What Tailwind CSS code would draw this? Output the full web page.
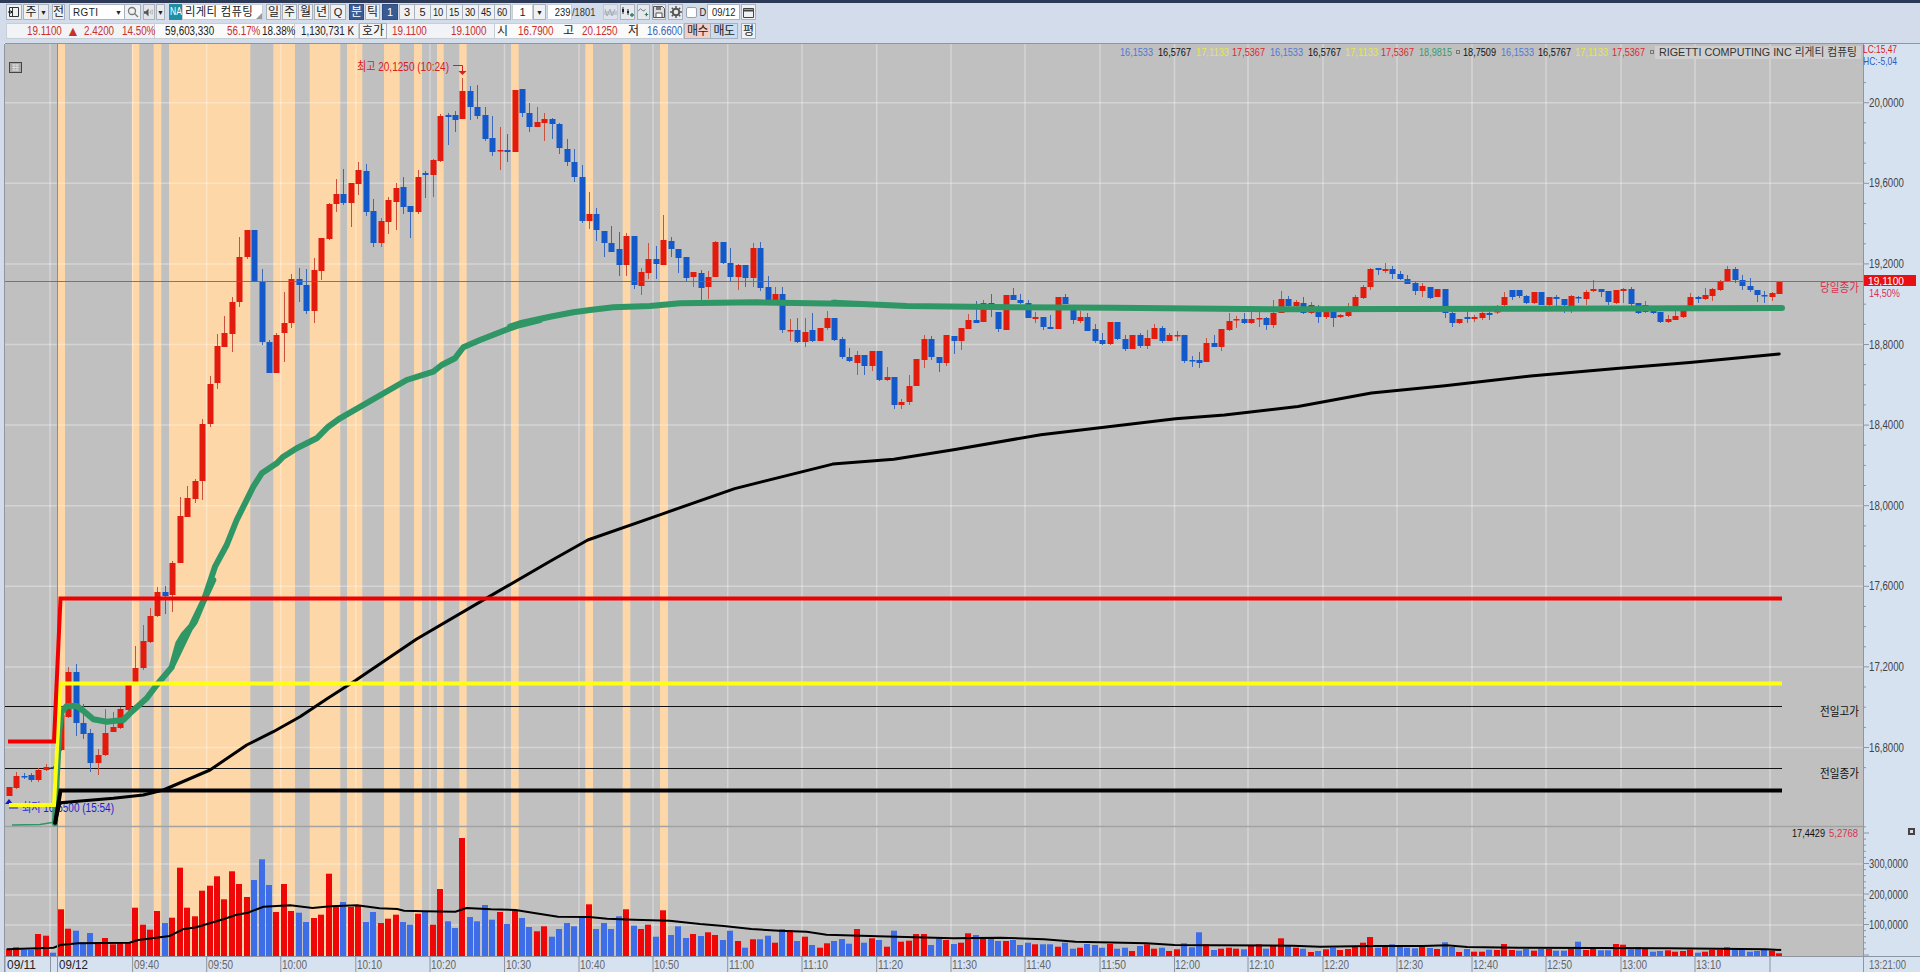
<!DOCTYPE html>
<html lang="ko">
<head>
<meta charset="utf-8">
<title>RGTI chart</title>
<script src="https://cdn.jsdelivr.net/npm/@tailwindcss/browser@4"></script>
</head>
<body class="m-0 w-[1920px] h-[972px] overflow-hidden bg-[#d3dcea] flex flex-col font-['Liberation_Sans','Noto_Sans_CJK_KR',sans-serif] text-[#222]">
<div class="h-[3px] bg-[#2c3a58] shrink-0"></div>

<!-- toolbar row 1 -->
<div class="mt-[1px] h-4 pl-[6px] flex items-stretch text-[12px] leading-none shrink-0">
  <div class="w-4 flex items-center justify-center border border-[#a9b1bd] bg-[#f0f1f3]"><svg width="12" height="12" viewBox="0 0 12 12" fill="none" stroke="#333"><path d="M1.5 1.5h9v9h-9zM4.5 1.5v9"/><path d="M0 6h4M2.5 4.5 4 6 2.5 7.500" stroke="#111"/></svg></div>
  <div class="ml-[1px] w-4 flex items-center justify-center border border-[#a9b1bd] bg-[#f0f1f3]">주</div>
  <div class="w-[10px] flex items-center justify-center border border-l-0 border-[#a9b1bd] bg-[#e8eaee] text-[7px]">▼</div>
  <div class="ml-[3px] w-[13px] flex items-center justify-center border border-[#a9b1bd] bg-[#f0f1f3]">전</div>
  <div class="ml-1 w-[44px] flex items-center pl-[3px] bg-white border border-[#a9b1bd] border-r-0 text-[11px] whitespace-nowrap"><span class="scale-x-[0.9] origin-left tracking-[0.5px]">RGTI</span></div>
  <div class="w-3 flex items-center justify-center bg-white border border-l-0 border-[#a9b1bd] text-[7px]">▼</div>
  <div class="w-4 flex items-center justify-center border border-l-0 border-[#a9b1bd] bg-[#f0f1f3]"><svg width="12" height="12" viewBox="0 0 12 12" fill="none" stroke="#777" stroke-width="1.300"><circle cx="5" cy="5" r="3.500"/><path d="m7.500 7.500 3.500 3.500"/></svg></div>
  <div class="ml-[2px] w-3 flex items-center justify-center border border-[#a9b1bd] bg-[#e4e6ea]"><svg width="11" height="11" viewBox="0 0 11 11"><path d="M0 4h2l3-3v9L2 7H0z" fill="#555"/><path d="M7 3.500v4M9 2.500v6" stroke="#777" stroke-dasharray="1 1"/></svg></div>
  <div class="ml-[1px] w-[9px] flex items-center justify-center border border-[#a9b1bd] bg-[#e8eaee] text-[7px]">▼</div>
  <div class="ml-1 w-[13px] flex items-center justify-center bg-[#1f8fa3] text-white text-[10px]"><span class="scale-x-[0.85]">NA</span></div>
  <div class="w-[81px] flex items-center pl-[2px] bg-white border border-[#c8ced6] whitespace-nowrap relative"><span class="scale-x-[0.95] origin-left tracking-[0.3px]">리게티 컴퓨팅</span><span class="absolute right-0 bottom-0 w-0 h-0 border-l-[6px] border-b-[6px] border-l-transparent border-b-[#999]"></span></div>
  <div class="ml-[3px] w-[15px] flex items-center justify-center border border-[#a9b1bd] bg-[#f0f1f3]">일</div>
  <div class="ml-[1px] w-[15px] flex items-center justify-center border border-[#a9b1bd] bg-[#f0f1f3]">주</div>
  <div class="ml-[1px] w-[15px] flex items-center justify-center border border-[#a9b1bd] bg-[#f0f1f3]">월</div>
  <div class="ml-[1px] w-[15px] flex items-center justify-center border border-[#a9b1bd] bg-[#f0f1f3]">년</div>
  <div class="ml-[1px] w-4 flex items-center justify-center border border-[#a9b1bd] bg-[#f0f1f3] text-[11px]">Q</div>
  <div class="ml-[3px] w-[15px] flex items-center justify-center border border-[#2f4d80] bg-[#3a5a92] text-white">분</div>
  <div class="ml-[1px] w-[15px] flex items-center justify-center border border-[#a9b1bd] bg-[#f0f1f3]">틱</div>
  <div class="ml-[2px] w-4 flex items-center justify-center border border-[#2f4d80] bg-[#3a5a92] text-white text-[11px]">1</div>
  <div class="ml-[1px] w-4 flex items-center justify-center border border-[#a9b1bd] bg-[#f0f1f3] text-[11px]">3</div>
  <div class="w-4 flex items-center justify-center border border-l-0 border-[#a9b1bd] bg-[#f0f1f3] text-[11px]">5</div>
  <div class="w-4 flex items-center justify-center border border-l-0 border-[#a9b1bd] bg-[#f0f1f3] text-[11px]"><span class="scale-x-[0.85]">10</span></div>
  <div class="w-4 flex items-center justify-center border border-l-0 border-[#a9b1bd] bg-[#f0f1f3] text-[11px]"><span class="scale-x-[0.85]">15</span></div>
  <div class="w-4 flex items-center justify-center border border-l-0 border-[#a9b1bd] bg-[#f0f1f3] text-[11px]"><span class="scale-x-[0.85]">30</span></div>
  <div class="w-4 flex items-center justify-center border border-l-0 border-[#a9b1bd] bg-[#f0f1f3] text-[11px]"><span class="scale-x-[0.85]">45</span></div>
  <div class="w-4 flex items-center justify-center border border-l-0 border-[#a9b1bd] bg-[#f0f1f3] text-[11px]"><span class="scale-x-[0.85]">60</span></div>
  <div class="ml-[1px] w-[21px] flex items-center justify-center bg-white border border-[#c8ced6] text-[11px]">1</div>
  <div class="w-[13px] flex items-center justify-center border border-[#a9b1bd] bg-[#f0f1f3] text-[7px]">▼</div>
  <div class="ml-[1px] w-[25px] flex items-center justify-end pr-[1px] bg-white border border-[#c8ced6] text-[11px]"><span class="scale-x-[0.85] origin-right">239</span></div>
  <div class="w-[28px] flex items-center text-[11px] text-[#333] whitespace-nowrap"><span class="scale-x-[0.85] origin-left">/1801</span></div>
  <div class="ml-[3px] w-[15px] flex items-center justify-center border border-[#c2c8d2] bg-[#dfe4ec]"><svg width="13" height="11" viewBox="0 0 13 11" fill="none" stroke="#a8aeb8"><path d="M1 2l2 7 3-7 2 7 3-7M0 5h13M0 7h13"/></svg></div>
  <div class="ml-[2px] w-[15px] flex items-center justify-center border border-[#a9b1bd] bg-[#e6e9ee]"><svg width="13" height="12" viewBox="0 0 13 12"><path d="M2 1v7M7 3v6" stroke="#333"/><path d="M1 3h2v3H1zM6 5h2v2H6z" fill="#222"/><path d="M11 7v4M9 9h4" stroke="#2a7d5a" stroke-width="1.300"/></svg></div>
  <div class="ml-[2px] w-[13px] flex items-center justify-center border border-[#a9b1bd] bg-[#e6e9ee]"><svg width="13" height="12" viewBox="0 0 13 12" fill="none"><path d="M0 5l3-3 3 3 3-2" stroke="#666"/><path d="M10 7v4M8 9h4" stroke="#2a7d5a" stroke-width="1.300"/></svg></div>
  <div class="ml-[2px] w-[14px] flex items-center justify-center border border-[#a9b1bd] bg-[#e6e9ee]"><svg width="12" height="12" viewBox="0 0 12 12"><path d="M.5.5h9l2 2v9H.5z" fill="#ddd" stroke="#555"/><path d="M3 1h5v3H3z" fill="#777"/><path d="M3 7h6v4.500H3z" fill="#fff" stroke="#555"/></svg></div>
  <div class="ml-[2px] w-[15px] flex items-center justify-center border border-[#a9b1bd] bg-[#e6e9ee]"><svg width="12" height="12" viewBox="0 0 12 12"><circle cx="6" cy="6" r="3.300" fill="none" stroke="#555" stroke-width="2"/><path d="M6 0v2M6 10v2M0 6h2M10 6h2M1.800 1.800l1.400 1.400M8.800 8.800l1.400 1.400M1.800 10.200l1.400-1.400M8.800 3.200l1.400-1.400" stroke="#555" stroke-width="1.500"/></svg></div>
  <div class="ml-[3px] w-[11px] h-[11px] self-center rounded-[2px] bg-white border border-[#9aa2ae]"></div>
  <div class="ml-[2px] w-2 flex items-center text-[11px]"><span class="scale-x-[0.85]">D</span></div>
  <div class="w-[33px] flex items-center justify-center bg-white border border-[#a9b1bd] text-[11px] whitespace-nowrap"><span class="scale-x-[0.85]">09/12</span></div>
  <div class="ml-[1px] w-[15px] flex items-center justify-center border border-[#a9b1bd] bg-[#f0f1f3]"><svg width="11" height="11" viewBox="0 0 11 11" fill="none" stroke="#444"><path d="M.5 1.500h10v9H.5z"/><path d="M.5 3.500h10" stroke-width="2"/></svg></div>
</div>

<!-- toolbar row 2 -->
<div class="mt-[3px] h-4 ml-[6px] flex items-center text-[12px] leading-none whitespace-nowrap shrink-0">
  <div class="w-[149px] h-full flex items-center bg-[#f1f3f6] border border-[#c8ced6] text-[#c9302c]">
    <span class="ml-5 w-[39px] scale-x-[0.82] origin-left">19.1100</span><span class="w-[18px] text-[14px]">▲</span><span class="w-[39px] scale-x-[0.82] origin-left">2.4200</span><span class="w-[32px] scale-x-[0.82] origin-left">14.50%</span>
  </div>
  <div class="w-[139px] h-full flex items-center bg-[#fafafa] border-y border-[#c8ced6]">
    <span class="ml-[10px] w-[62px] scale-x-[0.82] origin-left">59,603,330</span><span class="w-[35px] scale-x-[0.82] origin-left text-[#c9302c]">56.17%</span><span class="w-[32px] scale-x-[0.82] origin-left">18.38%</span>
  </div>
  <div class="w-[65px] h-full flex items-center bg-[#f1f3f6] border border-[#c8ced6]">
    <span class="ml-[6px] scale-x-[0.82] origin-left">1,130,731 K</span>
  </div>
  <div class="w-[28px] h-full flex items-center justify-center bg-[#f5f5f5] border border-[#a9b1bd]">호가</div>
  <div class="w-[107px] h-full flex items-center bg-[#f1f3f6] border-y border-[#c8ced6] text-[#c9302c]">
    <span class="ml-[5px] w-[59px] scale-x-[0.82] origin-left">19.1100</span><span class="w-[40px] scale-x-[0.82] origin-left">19.1000</span>
  </div>
  <div class="w-[190px] h-full flex items-center bg-[#fafafa] border border-[#c8ced6]">
    <span class="ml-[2px] w-[21px]">시</span><span class="w-[45px] scale-x-[0.82] origin-left text-[#c9302c]">16.7900</span><span class="w-[19px]">고</span><span class="w-[46px] scale-x-[0.82] origin-left text-[#c9302c]">20.1250</span><span class="w-[19px]">저</span><span class="w-[36px] scale-x-[0.82] origin-left text-[#3a66b8]">16.6600</span>
  </div>
  <div class="w-[27px] h-full flex items-center justify-center bg-[#f3cfc7] border border-[#a9b1bd] tracking-[-0.5px]">매수</div>
  <div class="w-[27px] h-full flex items-center justify-center bg-[#c9def2] border border-l-0 border-[#a9b1bd] tracking-[-0.5px]">매도</div>
  <div class="ml-[3px] w-[15px] h-full flex items-center justify-center bg-[#f1f2f4] border border-[#a9b1bd]">평</div>
</div>

<!-- chart -->
<svg id="chart" class="mt-[3px] block shrink-0" width="1920" height="930" viewBox="0 42 1920 930" font-size="12">
  <rect x="0" y="42" width="1920" height="930" fill="#d3dcea"/>
  <rect x="4" y="43" width="1916" height="929" fill="#f4f6fa"/>
  <rect x="5" y="44" width="1858" height="912" fill="#c0c0c0"/>
  <rect x="1864" y="44" width="56" height="928" fill="#d7e2f1"/>
  <rect x="5" y="957" width="1858" height="15" fill="#d7e2f1"/>
  <g id="bands" fill="#fdd7a8"></g>
  <g id="grid" stroke="#ffffff" stroke-opacity="0.32" stroke-width="1.500"></g>
  <path d="M5 826.500H1863" stroke="#a2a2a2" stroke-width="1.500"/>
  <path d="M5 956.500H1920M1863.500 44V972M5 43.500H1920M4.500 44V972" stroke="#8e96a2"/>
  <g id="vol"></g>
  <polyline id="vma" fill="none" stroke="#000" stroke-width="2"/>
  <path d="M57.500 44V956" stroke="#e06a6a"/>
  <path d="M5 706.500H1782M5 768.500H1782" stroke="#111"/>
  <g id="candles"></g>
  <path d="M5 281.500H1863" stroke="#d8334f" stroke-opacity="0.85"/>
  <text x="22" y="812" fill="#1f1fd0" textLength="92" lengthAdjust="spacingAndGlyphs">최저 16,6500 (15:54)</text>
  <path d="M9 808h9" stroke="#1f1fd0"/>
  <path d="M5 804l4-5 4 5z" fill="#1414c8"/>
  <polyline points="12,825 40,824.500 55,822" fill="none" stroke="#2f9665" stroke-width="1.500"/>
  <polyline id="green" fill="none" stroke="#2f9665" stroke-width="6" stroke-linejoin="round" stroke-linecap="round"/>
  <polyline id="ma" fill="none" stroke="#000" stroke-width="3" stroke-linejoin="round" stroke-linecap="round"/>
  <polyline points="9,805 54,805 60.500,683.500 1782,683.500" fill="none" stroke="#ffff14" stroke-width="4"/>
  <polyline points="8,741.500 54,741.500 60.500,598.500 1782,598.500" fill="none" stroke="#f00000" stroke-width="4"/>
  <polyline points="55,824 60.500,790.500 1782,790.500" fill="none" stroke="#000" stroke-width="4"/>

  <!-- annotation -->
  <text x="357" y="71" fill="#d42020" textLength="92" lengthAdjust="spacingAndGlyphs">최고 20,1250 (10:24)</text>
  <path d="M453 65.500h9.500V71" fill="none" stroke="#d42020"/>
  <path d="M458.500 71h8l-4 4z" fill="#d42020"/>

  <!-- grid icon -->
  <rect x="9.500" y="62.500" width="12" height="10" fill="#a8a8a8" stroke="#444"/>
  <path d="M12 65h7M12 67.500h7M12 70h7M14 64v7M17 64v7" stroke="#dcdcdc"/>

  <!-- legend -->
  <rect x="1655" y="46" width="206" height="13" fill="#cfcfcf"/>
  <g font-size="11">
    <text x="1120" y="56" fill="#4f78d8" textLength="33" lengthAdjust="spacingAndGlyphs">16,1533</text>
    <text x="1158" y="56" fill="#111" textLength="33" lengthAdjust="spacingAndGlyphs">16,5767</text>
    <text x="1196" y="56" fill="#e6e64a" textLength="33" lengthAdjust="spacingAndGlyphs">17,1133</text>
    <text x="1232" y="56" fill="#dc2830" textLength="33" lengthAdjust="spacingAndGlyphs">17,5367</text>
    <text x="1270" y="56" fill="#4f78d8" textLength="33" lengthAdjust="spacingAndGlyphs">16,1533</text>
    <text x="1308" y="56" fill="#111" textLength="33" lengthAdjust="spacingAndGlyphs">16,5767</text>
    <text x="1345" y="56" fill="#e6e64a" textLength="33" lengthAdjust="spacingAndGlyphs">17,1133</text>
    <text x="1381" y="56" fill="#dc2830" textLength="33" lengthAdjust="spacingAndGlyphs">17,5367</text>
    <text x="1419" y="56" fill="#3a9a68" textLength="33" lengthAdjust="spacingAndGlyphs">18,9815</text>
    <rect x="1456.500" y="50.500" width="3" height="3" fill="none" stroke="#777"/>
    <text x="1463" y="56" fill="#111" textLength="33" lengthAdjust="spacingAndGlyphs">18,7509</text>
    <text x="1501" y="56" fill="#4f78d8" textLength="33" lengthAdjust="spacingAndGlyphs">16,1533</text>
    <text x="1538" y="56" fill="#111" textLength="33" lengthAdjust="spacingAndGlyphs">16,5767</text>
    <text x="1575" y="56" fill="#e6e64a" textLength="33" lengthAdjust="spacingAndGlyphs">17,1133</text>
    <text x="1612" y="56" fill="#dc2830" textLength="33" lengthAdjust="spacingAndGlyphs">17,5367</text>
    <rect x="1650.500" y="50.500" width="3" height="3" fill="none" stroke="#777"/>
    <text x="1659" y="56" fill="#333" textLength="198" lengthAdjust="spacingAndGlyphs">RIGETTI COMPUTING INC  리게티 컴퓨팅</text>
  </g>
  <g font-size="11">
    <text x="1863" y="53" fill="#d42020" textLength="34" lengthAdjust="spacingAndGlyphs">LC:15,47</text>
    <text x="1863" y="65" fill="#2a5fc0" textLength="34" lengthAdjust="spacingAndGlyphs">HC:-5,04</text>
  </g>

  <!-- price axis -->
  <g id="ticks" stroke="#8a94a2"></g>
  <g fill="#444" font-size="12.500">
    <text x="1869" y="107" textLength="35" lengthAdjust="spacingAndGlyphs">20,0000</text>
    <text x="1869" y="187" textLength="35" lengthAdjust="spacingAndGlyphs">19,6000</text>
    <text x="1869" y="268" textLength="35" lengthAdjust="spacingAndGlyphs">19,2000</text>
    <text x="1869" y="349" textLength="35" lengthAdjust="spacingAndGlyphs">18,8000</text>
    <text x="1869" y="429" textLength="35" lengthAdjust="spacingAndGlyphs">18,4000</text>
    <text x="1869" y="510" textLength="35" lengthAdjust="spacingAndGlyphs">18,0000</text>
    <text x="1869" y="590" textLength="35" lengthAdjust="spacingAndGlyphs">17,6000</text>
    <text x="1869" y="671" textLength="35" lengthAdjust="spacingAndGlyphs">17,2000</text>
    <text x="1869" y="752" textLength="35" lengthAdjust="spacingAndGlyphs">16,8000</text>
    <text x="1869" y="868" textLength="39" lengthAdjust="spacingAndGlyphs">300,0000</text>
    <text x="1869" y="899" textLength="39" lengthAdjust="spacingAndGlyphs">200,0000</text>
    <text x="1869" y="929" textLength="39" lengthAdjust="spacingAndGlyphs">100,0000</text>
  </g>
  <rect x="1864" y="275" width="52" height="11" fill="#e81010"/>
  <text x="1868" y="285" fill="#fff" font-size="11" textLength="36" lengthAdjust="spacingAndGlyphs">19,1100</text>
  <text x="1869" y="297" fill="#d8334f" font-size="11" textLength="31" lengthAdjust="spacingAndGlyphs">14,50%</text>
  <text x="1820" y="292" fill="#d8334f" textLength="39" lengthAdjust="spacingAndGlyphs">당일종가</text>
  <text x="1820" y="716" fill="#111" textLength="39" lengthAdjust="spacingAndGlyphs">전일고가</text>
  <text x="1820" y="778" fill="#111" textLength="39" lengthAdjust="spacingAndGlyphs">전일종가</text>

  <!-- volume labels -->
  <g font-size="11">
    <text x="1792" y="837" fill="#111" textLength="33" lengthAdjust="spacingAndGlyphs">17,4429</text>
    <text x="1829" y="837" fill="#d8334f" textLength="29" lengthAdjust="spacingAndGlyphs">5,2768</text>
  </g>
  <rect x="1908" y="828" width="7" height="7" fill="#444"/>
  <rect x="1910" y="830" width="3" height="3" fill="#ddd"/>

  <!-- time axis -->
  <path id="tticks" stroke="#8a94a2"/>
  <g fill="#222" font-size="12.500">
    <text x="7" y="969" textLength="29" lengthAdjust="spacingAndGlyphs">09/11</text>
    <text x="59" y="969" textLength="29" lengthAdjust="spacingAndGlyphs">09/12</text>
  </g>
  <g fill="#666" font-size="12.500">
    <text x="134" y="969" textLength="25" lengthAdjust="spacingAndGlyphs">09:40</text>
    <text x="208" y="969" textLength="25" lengthAdjust="spacingAndGlyphs">09:50</text>
    <text x="282" y="969" textLength="25" lengthAdjust="spacingAndGlyphs">10:00</text>
    <text x="357" y="969" textLength="25" lengthAdjust="spacingAndGlyphs">10:10</text>
    <text x="431" y="969" textLength="25" lengthAdjust="spacingAndGlyphs">10:20</text>
    <text x="506" y="969" textLength="25" lengthAdjust="spacingAndGlyphs">10:30</text>
    <text x="580" y="969" textLength="25" lengthAdjust="spacingAndGlyphs">10:40</text>
    <text x="654" y="969" textLength="25" lengthAdjust="spacingAndGlyphs">10:50</text>
    <text x="729" y="969" textLength="25" lengthAdjust="spacingAndGlyphs">11:00</text>
    <text x="803" y="969" textLength="25" lengthAdjust="spacingAndGlyphs">11:10</text>
    <text x="878" y="969" textLength="25" lengthAdjust="spacingAndGlyphs">11:20</text>
    <text x="952" y="969" textLength="25" lengthAdjust="spacingAndGlyphs">11:30</text>
    <text x="1026" y="969" textLength="25" lengthAdjust="spacingAndGlyphs">11:40</text>
    <text x="1101" y="969" textLength="25" lengthAdjust="spacingAndGlyphs">11:50</text>
    <text x="1175" y="969" textLength="25" lengthAdjust="spacingAndGlyphs">12:00</text>
    <text x="1249" y="969" textLength="25" lengthAdjust="spacingAndGlyphs">12:10</text>
    <text x="1324" y="969" textLength="25" lengthAdjust="spacingAndGlyphs">12:20</text>
    <text x="1398" y="969" textLength="25" lengthAdjust="spacingAndGlyphs">12:30</text>
    <text x="1473" y="969" textLength="25" lengthAdjust="spacingAndGlyphs">12:40</text>
    <text x="1547" y="969" textLength="25" lengthAdjust="spacingAndGlyphs">12:50</text>
    <text x="1622" y="969" textLength="25" lengthAdjust="spacingAndGlyphs">13:00</text>
    <text x="1696" y="969" textLength="25" lengthAdjust="spacingAndGlyphs">13:10</text>
    <text x="1869" y="969" textLength="37" lengthAdjust="spacingAndGlyphs">13:21:00</text>
  </g>
</svg>

<script>
(function(){
  function $(id){return document.getElementById(id);}
  var XT=[50,132.6,206.7,280.8,355.8,430,504.5,579,653,727.7,802,876.7,951,1025,1100,1174.5,1248,1323,1397,1472,1546,1621,1695,1770];

  // orange session bands
  var B=[[58,65],[132,139.3],[153.7,161.3],[169,250.3],[273.3,295],[309.7,340.3],[347,362.3],[384,399.7],[414,422],[437,443.7],[459.3,466.7],[511,518.7],[585.3,593],[622.7,630.3],[660,668]];
  $('bands').innerHTML=B.map(function(b){return '<rect x="'+b[0]+'" y="44" width="'+(b[1]-b[0])+'" height="912"/>';}).join('');

  // grid
  var g='',ys=[102.7,183.3,263.9,344.5,425.1,505.7,586.3,666.9,747.5,864,895,925];
  ys.forEach(function(y){g+='<path d="M5 '+y+'H1863"/>';});
  XT.forEach(function(x){g+='<path d="M'+x+' 44V956"/>';});
  $('grid').innerHTML=g;

  // candles: colour, body top, body bottom, wick top, wick bottom (i = -7 ...)
  var C="r787,796,787,796 r776,788,772,789 b776,777,773,779 b775,780,773,782 r770,780,768,782 r767,770,764,771 b767,768,766,769 r715,750,710,751 r672,717,667,718 b672,723,664,736 b723,734,704,739 b733,763,729,772 r755,763,749,775 r733,755,709,756 r727,732,712,732 r709,728,707,729 r685,710,685,711 r668,682,646,682 r641,668,625,670 r616,642,608,643 r592,616,587,617 b592,596,586,614 r563,595,561,612 r516,563,497,563 r498,517,486,517 r481,499,479,503 r424,481,419,500 r384,424,376,427 r346,383,334,389 r333,347,316,347 r302,334,297,352 r257,302,237,307 r230,257,230,259 b230,282,230,282 b282,342,269,345 b342,373,340,373 r335,373,333,373 r323,333,292,362 r279,323,274,328 b279,285,268,302 b285,311,269,314 r270,311,258,323 r238,271,238,280 r204,239,203,240 r194,204,179,212 b194,203,169,205 r183,203,183,227 r170,184,162,195 b171,212,164,216 b211,243,199,247 r221,243,218,247 r200,222,197,234 r188,202,183,230 b187,207,177,214 b206,212,206,238 r177,212,170,214 b173,175,171,198 r160,175,159,197 r116,161,114,162 b115,117,113,145 b115,120,111,132 r91,119,78,119 b91,107,86,120 b107,116,85,119 b115,139,107,141 b138,152,116,156 r150,151,127,170 b150,152,134,162 r90,152,90,152 b89,113,89,117 b113,127,103,132 r122,127,107,127 r119,123,113,141 b119,124,118,139 b124,148,123,154 b149,162,139,166 b162,177,149,182 b177,221,165,223 r214,221,192,229 b214,230,208,241 b231,243,231,257 b243,252,226,252 b249,265,232,276 r236,265,233,276 b236,285,236,289 r272,286,268,295 r259,273,243,279 b259,264,246,279 r240,265,215,265 b241,249,237,257 b249,258,249,273 b257,278,257,282 r272,277,272,287 b273,288,270,301 r277,287,271,299 r242,277,241,277 b242,263,242,264 b263,277,248,282 r265,277,264,290 b265,278,265,287 r248,278,243,287 b248,288,242,291 b287,301,276,302 r294,302,287,302 b294,330,287,333 r330,331,319,341 b330,342,318,343 r332,342,318,347 b330,341,313,342 r328,341,328,341 r318,328,311,330 b318,340,318,341 b339,357,337,359 b357,361,348,362 r355,363,351,375 b355,366,355,375 r351,366,351,371 b351,380,351,381 r377,380,367,381 b377,405,377,409 r402,405,399,409 r386,402,375,405 r359,386,359,386 r339,360,335,368 b339,357,336,360 b357,363,357,372 r335,363,335,366 b336,341,336,354 r328,341,328,350 r320,329,314,329 b320,323,301,323 r303,322,300,322 b303,307,294,317 b312,329,312,332 r295,330,295,330 b295,300,288,300 b300,303,294,304 b303,318,300,318 r317,319,312,323 b317,327,317,330 b327,329,315,329 r297,329,297,329 b297,304,294,304 b310,320,307,324 r317,321,311,323 b317,331,313,331 b329,341,324,343 b340,344,333,345 r322,344,322,345 b322,339,322,340 b339,349,335,351 r335,349,335,349 b335,346,333,348 r338,346,330,349 r328,339,324,339 b328,341,326,343 r335,341,333,341 r335,336,331,341 b335,361,335,363 b360,361,356,367 b360,363,352,368 r343,362,338,362 b343,347,335,347 r329,347,329,351 r321,330,313,331 r319,320,316,328 b319,323,313,324 r319,323,312,324 r318,319,312,327 b318,325,317,330 r313,325,300,328 r299,313,291,313 b299,306,296,308 r302,306,300,312 b303,313,297,314 r305,313,302,314 b307,317,305,323 r312,317,308,319 b307,318,307,327 r315,317,314,318 r311,316,303,317 r297,307,295,312 r287,298,285,299 r269,287,268,290 b268,270,268,275 r269,271,263,273 b269,274,266,279 b274,279,271,280 b279,284,275,284 b283,291,282,295 r286,291,283,297 b287,298,287,299 r289,297,289,297 b289,313,289,318 b313,323,310,327 r319,323,319,324 b317,319,311,323 r317,319,315,322 r313,318,311,320 b313,315,310,320 r311,312,305,314 r297,305,292,310 b290,297,290,300 b290,296,290,298 b296,303,295,304 r292,303,292,304 b292,305,292,305 r297,305,297,307 b297,299,295,308 b299,305,299,313 r296,306,295,313 b297,298,296,303 r292,299,290,305 r289,291,280,292 b289,292,289,297 b291,302,291,305 r290,303,290,304 r289,291,288,303 b289,304,287,307 b303,313,303,314 r305,312,301,313 b307,313,306,314 b312,322,312,323 r319,322,315,323 r316,320,311,320 r311,317,311,318 r297,306,293,306 b297,299,296,303 r295,299,288,300 r289,296,288,301 r281,290,280,291 r269,281,266,282 b269,280,267,283 b280,286,275,290 b286,290,278,292 b290,295,290,302 b295,296,291,303 r293,297,292,301 r282,294,282,294".split(' ');
  var RB='#e31b0c',BB='#1359c9',RW='#c9523f',BW='#3c69b9',s='';
  C.forEach(function(t,n){
    var i=n-7,x=Math.round(60.7+7.44*i),red=t[0]=='r',v=t.slice(1).split(',').map(Number);
    s+='<rect x="'+x+'" y="'+v[2]+'" width="1" height="'+(v[3]-v[2])+'" fill="'+(red?RW:BW)+'"/>';
    s+='<rect x="'+(x-2.5)+'" y="'+v[0]+'" width="6" height="'+Math.max(v[1]-v[0],1.5)+'" fill="'+(red?RB:BB)+'"/>';
  });
  $('candles').innerHTML=s;

  // volume bars
  var V1="r358 r352 b360 b360 r312 r317 b368 r238 r296 b302 b337 b309 r338 r324 r343 r338 r337 r233 r284 r299 r243 b279 r263 r113 r233 r259 r182 r167 r139 r208 r124 r162 r201 b150 b88 b165 r246 r162 r243 b248 b276 r264 r254 r131 r229 b216 r231 r228 b276 b246 r279 r266 r254 b276 b284 r251 b245 r284 r177 b274 b294 r24 b261 b274 b225 b269 r246 b282 r243 b264 b291 r304 r289 b320 b297 b279 b289 b264 r223 b297 b279 b297 b259 r238 b287 r297 r284 b320 r241 b315 b289 b324 r312 b318 r307 r315 b330 b302 r333 b353 r328 b328 b317 r338 b297 r300 b333 r320 b345 r353 r340 b333 b327 b341 r297 b338 r325 b330 r350 b302 r335 r332 r312 r312 b345 b325 r330 b342 r338 r310 b315 r323 b325 b333 r333 b330 b345 b338 r343 b343 b343 r350 b338 b356 r353 b342 b345 b353 r342 b356 b353 r363 b348 r343 r356 b353 r363 r358 b340 b352 b307 r343 b360 r356 r353 r356 b358 r348 r343 b356 r348 r325 b348 r353 b356 r366 b363".split(' ');
  var V2="r448 b443 r450 r447 r441 r428 r411 b443 r438 b433 b437 b443 b445 r440 b444 r447 b427 b441 r456 b447 r455 r455 b449 r450 r432 r450 b452 b447 r452 b447 r447 b452 b452 r447 b425 r450 r447 b451 b451 r432 r434 b448 b441 r447 b455 b453 r451 r455 r453 r449 b458 r455 r450 r450 r442 b450 b450 b455 b453 b450 r452 r460".split(' ');
  var h='';
  function bar(t,i,base){
    var x=Math.round(60.7+7.44*i),y=base+Number(t.slice(1))/3;
    h+='<rect x="'+(x-3)+'" y="'+y.toFixed(1)+'" width="6" height="'+(956-y).toFixed(1)+'" fill="'+(t[0]=='r'?'#ef0606':'#3d6ee8')+'"/>';
  }
  V1.forEach(function(t,n){bar(t,n-7,830);});
  V2.forEach(function(t,n){bar(t,n+170,800);});
  $('vol').innerHTML=h;

  function conv(a,ox,oy,sx,sy){return a.map(function(p){return (ox+p[0]/sx).toFixed(1)+','+(oy+p[1]/sy).toFixed(1);});}

  // volume MA
  var vm=conv([[15,358],[120,353],[135,345],[175,340],[290,338],[310,330],[380,318],[410,298],[440,292],[500,268],[530,254],[555,248],[590,230],[650,226],[700,234],[740,229],[800,226],[850,235],[890,237],[905,242],[950,244],[1020,245],[1045,234],[1100,238],[1155,240],[1200,250],[1250,260],[1320,261],[1360,266],[1420,269],[1500,272],[1568,282]],0,830,2.24,3)
   .concat(conv([[60,288],[130,297],[200,302],[270,305],[320,314],[450,319],[640,325],[760,323],[870,328],[950,335],[1130,340],[1200,345],[1300,346],[1500,347],[1568,350]],700,830,2.529,3))
   .concat(conv([[130,438],[270,438],[330,436],[385,441],[520,443],[910,445],[1165,448],[1205,450]],1320,800,2.613,3));
  $('vma').setAttribute('points',vm.join(' '));

  // green MA
  var gr=conv([[165,730],[170,600],[178,450],[185,395],[200,378],[230,378],[250,392],[280,418],[320,425],[370,420],[395,395],[440,355],[470,315],[515,262],[530,210],[545,180],[585,125],[610,65],[640,0]],0,580,3,3).concat(
    conv([[215,890],[235,820],[250,795],[285,755],[315,680],[345,590],[380,525],[410,450],[460,350],[485,310],[530,280],[550,260],[590,235],[650,205],[685,170],[720,145]],100,370,3,3),
    conv([[920,990],[1000,965],[1025,945],[1065,925],[1090,892],[1140,870],[1230,835],[1260,825],[1320,810]],100,50,3,3),
    conv([[210,800],[240,790],[330,770],[400,757],[450,750],[520,742],[630,738],[720,730],[950,727],[1260,732]],440,60,3,3),
    conv([[160,158],[380,168],[700,172],[1000,173],[1500,178]],780,250,3,3),
    ['1782,308']);
  $('green').setAttribute('points',gr.join(' '));

  // black MA
  var ma=conv([[165,730],[180,668],[340,655],[430,645],[490,630],[560,600],[630,570],[740,495],[820,455],[900,410]],0,580,3,3)
    .concat(conv([[268,570],[290,556],[340,522],[398,488],[450,458],[480,441],[540,420],[600,399],[680,379],[730,375],[780,367],[850,355],[900,349],[960,342],[1000,339],[1060,332],[1120,321],[1180,315],[1250,307],[1320,301],[1380,296],[1453,289]],0,0,0.81666,0.81666));
  $('ma').setAttribute('points',ma.join(' '));

  // axis ticks
  var t='';
  for(var k=-3;k<34;k++){var y=102.7+k*20.15; if(y>46&&y<824){t+='<path d="M1864 '+y.toFixed(1)+'h'+(((k%4)+4)%4==0?5:2)+'"/>';}}
  for(var v=0;v<22;v++){var yy=955-v*6.1;t+='<path d="M1864 '+yy.toFixed(1)+'h'+(v%5==0?5:2)+'"/>';}
  $('ticks').innerHTML=t;
  var tt='M5 957V972M50.5 957V972M57.5 957V972';
  XT.slice(1).forEach(function(x){tt+='M'+x+' 957V972';});
  $('tticks').setAttribute('d',tt);
})();
</script>
</body>
</html>
